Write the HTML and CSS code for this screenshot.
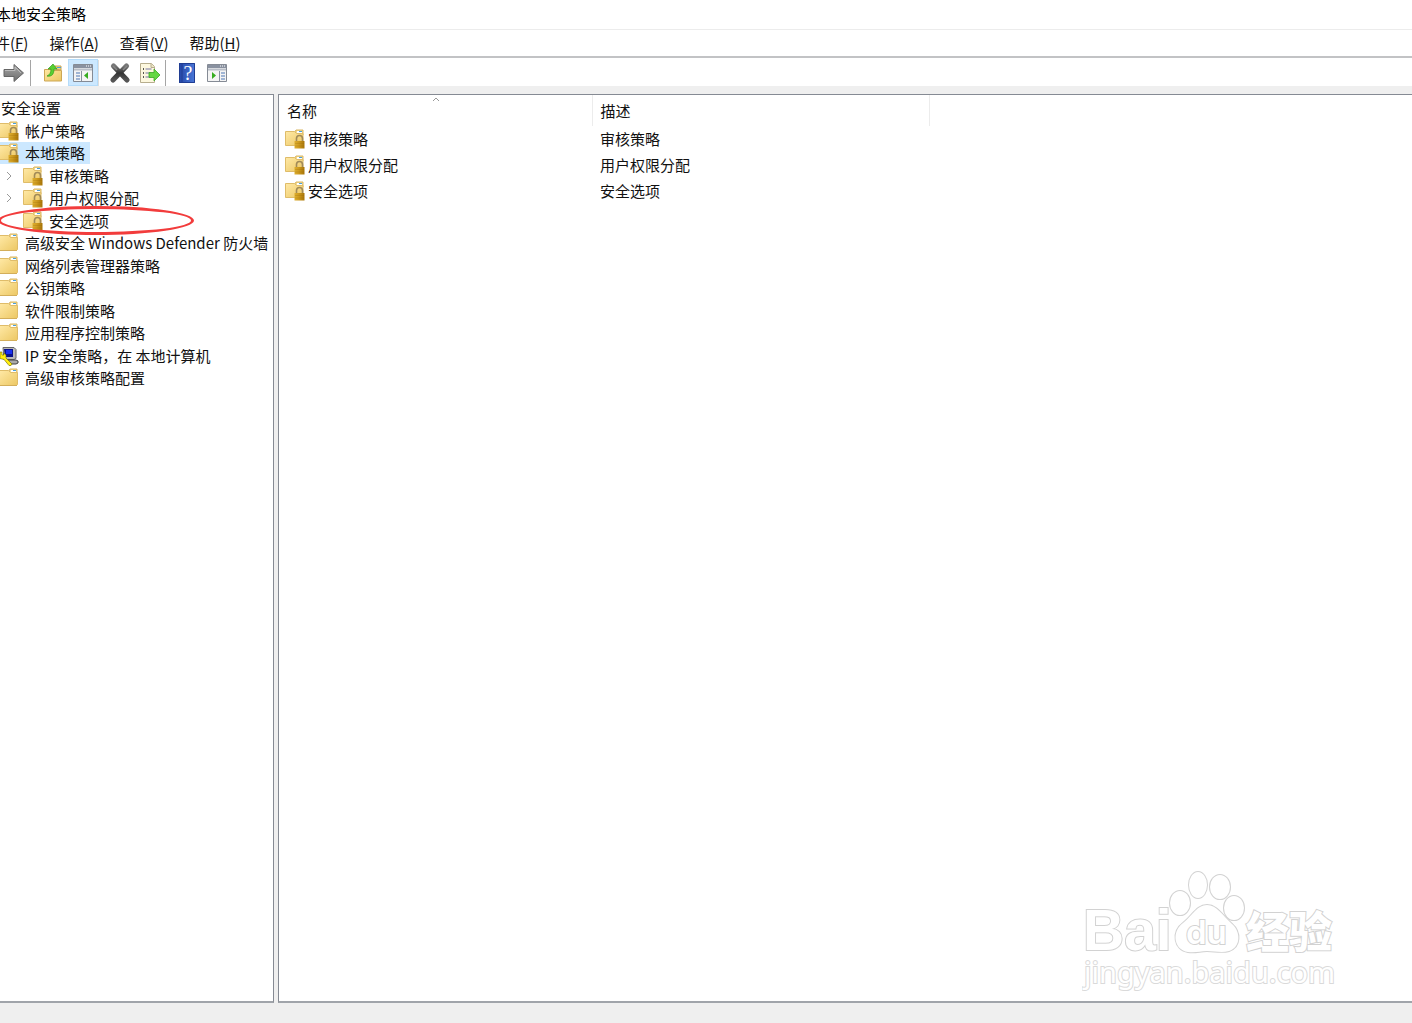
FILE: index.html
```html
<!DOCTYPE html>
<html lang="zh-CN">
<head>
    <meta charset="UTF-8">
    <title>本地安全策略</title>
    <link rel="stylesheet" href="styles.css">
</head>
<body>
    <!-- shared icons -->
    <svg class="sprite" aria-hidden="true">
        <defs>
            <linearGradient id="gold" x1="0" y1="0" x2="1" y2="1">
                <stop offset="0" stop-color="#ffe9a6"/>
                <stop offset="1" stop-color="#ecc763"/>
            </linearGradient>
            <linearGradient id="brass" x1="0" y1="0" x2="1" y2="0">
                <stop offset="0" stop-color="#dcae30"/>
                <stop offset="0.4" stop-color="#cf9c20"/>
                <stop offset="1" stop-color="#a87508"/>
            </linearGradient>
            <linearGradient id="metal" x1="0" y1="0" x2="0" y2="1">
                <stop offset="0" stop-color="#a8a8a8"/>
                <stop offset="1" stop-color="#6c6c6c"/>
            </linearGradient>
            <linearGradient id="dark" x1="0" y1="0" x2="0" y2="1">
                <stop offset="0" stop-color="#777"/>
                <stop offset="0.5" stop-color="#333"/>
                <stop offset="1" stop-color="#555"/>
            </linearGradient>
            <linearGradient id="blue" x1="0" y1="0" x2="1" y2="0">
                <stop offset="0" stop-color="#2446a8"/>
                <stop offset="1" stop-color="#4a78d8"/>
            </linearGradient>
            <symbol id="folder" viewBox="0 0 20 20">
                <path d="M9 5l2-4h7v5H9z" fill="#f3d98c" stroke="#d9b765"/>
                <path d="M12 2h5v2h-5z" fill="#fff"/>
                <path d="M14 2h3v1h-3z" fill="#4aa0dc"/>
                <path d="M.5 2.500h9l2 2h7v12l-1 1H.5z" fill="url(#gold)" stroke="#dfbc69"/>
                <path d="M1 17.500h17" stroke="#d3ae5a"/>
            </symbol>
            <symbol id="lock-folder" viewBox="0 0 20 20">
                <path d="M9 4l2-3h7v5H9z" fill="#f3d98c" stroke="#d9b765"/>
                <path d="M12 2h5v2h-5z" fill="#fff"/>
                <path d="M14 2h3v1h-3z" fill="#4aa0dc"/>
                <path d="M.5 2.500h9l2 2H18v12H.5z" fill="url(#gold)" stroke="#dfbc69"/>
                <path d="M11.500 12.500v-3a3 3 0 0 1 6 0v3" fill="none" stroke="#a08a58" stroke-width="1.600"/>
                <path d="M9.500 12h10v7.500h-10z" fill="url(#brass)"/>
                <path d="M10 14.500h9M10 17h9" stroke="#8f6306" stroke-width=".7" opacity=".3"/>
            </symbol>
            <symbol id="computer" viewBox="0 0 20 20">
                <path d="M4 1.500h11l2 2v9l-2 1H5z" fill="#b9b9b9" stroke="#666"/>
                <path d="M5 3h9v8H6z" fill="#0a128c"/>
                <path d="M7 4h6v4H7z" fill="#1830f0"/>
                <path d="M8 14h9l2 1v2l-2 1h-6z" fill="#aaa" stroke="#444"/>
                <path d="M1 6l2 0 0 3 2 0 0-2 2 2 0 3 6 6-1 1.500h-2l-5-6-4-1z" fill="#ffee10" stroke="#6f6800" stroke-width=".6"/>
            </symbol>
            <symbol id="console" viewBox="0 0 20 18">
                <path d="M.5.5h19v17H.5z" fill="#f4f4f4" stroke="#858b95"/>
                <path d="M1 1h18v3H1z" fill="#8991a0"/>
                <path d="M13 2h1M15 2h1M17 2h1" stroke="#fff"/>
                <path d="M1 5.500h18" stroke="#b9bec8" stroke-width="2"/>
            </symbol>
        </defs>
    </svg>

    <header class="title-bar"><h1>本地安全策略</h1></header>

    <nav class="menu-bar">
        <button>件(<u>F</u>)</button>
        <button>操作(<u>A</u>)</button>
        <button>查看(<u>V</u>)</button>
        <button>帮助(<u>H</u>)</button>
    </nav>

    <div class="toolbar">
        <button aria-label="前进">
            <svg width="22" height="20" viewBox="0 0 22 20"><path d="M1 6.500h10V1.500l9.500 8.500-9.500 8.500v-5H1z" fill="url(#metal)" stroke="#666"/><path d="M2 7.500h10V4l6 6" fill="none" stroke="#bbb"/></svg>
        </button>
        <span class="divider"></span>
        <button aria-label="向上">
            <svg width="20" height="20" viewBox="0 0 20 20"><path d="M11 6l1-3h6v4z" fill="#f2d482" stroke="#caa552"/><path d="M14 4h4v1h-4z" fill="#4aa0dc"/><path d="M1.500 6.500h7l2 1h8V18H1.500z" fill="url(#gold)" stroke="#cda755"/><path d="M4 13c3-1 4-4 4-7H5l5-5 4 5h-3c0 5-2 8-7 7z" fill="#58cf32" stroke="#319c1c" stroke-width=".7"/></svg>
        </button>
        <button class="active" aria-label="显示控制台树">
            <svg width="20" height="18" viewBox="0 0 20 18"><use href="#console"/><path d="M8.500 7v10" stroke="#8991a0"/><path d="M3 9h4M3 12h4M3 15h4" stroke="#4d77b5"/><path d="M15 8v7l-4-3.500z" fill="#37ad20"/></svg>
        </button>
        <span class="divider light"></span>
        <button aria-label="删除">
            <svg width="22" height="22" viewBox="0 0 22 22"><path d="M4.500 4L18 18M17.500 4L4 18" stroke="url(#dark)" stroke-width="5.200" stroke-linecap="round"/><path d="M4 4l4 4M18 4l-4 4" stroke="#888" stroke-width="1.500"/></svg>
        </button>
        <button aria-label="导出列表">
            <svg width="22" height="22" viewBox="0 0 22 22"><path d="M1.500 1.500h11l3 3v16h-14z" fill="#fdf8df" stroke="#b7ae8e"/><path d="M12 1.500v4h4" fill="#ece4c5" stroke="#b7ae8e"/><path d="M4 7h1M4 11h1M4 15h1" stroke="#222" stroke-width="1.500"/><path d="M6.500 7h6M6.500 11h5M6.500 15h5" stroke="#7776a5"/><path d="M10 10.500h5V7l6 6-6 6v-3.500h-5z" fill="#65d842" stroke="#3aa822" stroke-width=".8"/></svg>
        </button>
        <span class="divider tight"></span>
        <button aria-label="帮助">
            <svg width="18" height="20" viewBox="0 0 18 20"><path d="M1 0h16v20H1z" fill="url(#blue)"/><path d="M1.500 .5h15v19h-15zM4 1v18" fill="none" stroke="#203d92"/><text class="help-mark" x="10" y="17" text-anchor="middle">?</text></svg>
        </button>
        <button aria-label="显示操作窗格">
            <svg width="20" height="18" viewBox="0 0 20 18"><use href="#console"/><path d="M12.500 7v10" stroke="#8991a0"/><path d="M14 9h4M14 12h4M14 15h4" stroke="#4d77b5"/><path d="M5 8v7l4-3.500z" fill="#37ad20"/></svg>
        </button>
    </div>

    <main class="panes">
        <ul class="tree pane">
            <li class="root">安全设置</li>
            <li><svg class="icon"><use href="#lock-folder"/></svg>帐户策略</li>
            <li class="selected"><svg class="icon"><use href="#lock-folder"/></svg>本地策略</li>
            <li class="child"><svg class="chevron" viewBox="0 0 6 8"><path d="M1 0l4 4-4 4"/></svg><svg class="icon"><use href="#lock-folder"/></svg>审核策略</li>
            <li class="child"><svg class="chevron" viewBox="0 0 6 8"><path d="M1 0l4 4-4 4"/></svg><svg class="icon"><use href="#lock-folder"/></svg>用户权限分配</li>
            <li class="child marked"><span class="chevron"></span><svg class="icon"><use href="#lock-folder"/></svg>安全选项</li>
            <li><svg class="icon"><use href="#folder"/></svg>高级安全 Windows Defender 防火墙</li>
            <li><svg class="icon"><use href="#folder"/></svg>网络列表管理器策略</li>
            <li><svg class="icon"><use href="#folder"/></svg>公钥策略</li>
            <li><svg class="icon"><use href="#folder"/></svg>软件限制策略</li>
            <li><svg class="icon"><use href="#folder"/></svg>应用程序控制策略</li>
            <li><svg class="icon"><use href="#computer"/></svg>IP 安全策略，在 本地计算机</li>
            <li><svg class="icon"><use href="#folder"/></svg>高级审核策略配置</li>
        </ul>

        <section class="list pane">
            <table>
                <thead>
                    <tr>
                        <th class="name">名称<svg class="sort" viewBox="0 0 8 5"><path d="M1 4l3-3 3 3"/></svg></th>
                        <th class="desc">描述</th>
                        <th></th>
                    </tr>
                </thead>
                <tbody>
                    <tr><td><div class="item"><svg class="icon"><use href="#lock-folder"/></svg>审核策略</div></td><td>审核策略</td><td></td></tr>
                    <tr><td><div class="item"><svg class="icon"><use href="#lock-folder"/></svg>用户权限分配</div></td><td>用户权限分配</td><td></td></tr>
                    <tr><td><div class="item"><svg class="icon"><use href="#lock-folder"/></svg>安全选项</div></td><td>安全选项</td><td></td></tr>
                </tbody>
            </table>

            <svg class="watermark" width="264" height="130" viewBox="0 0 264 130">
                <text class="brand" x="1" y="84">Bai</text>
                <g class="paw">
                    <ellipse cx="98" cy="37" rx="10" ry="12"/>
                    <ellipse cx="116" cy="19" rx="9" ry="13"/>
                    <ellipse cx="138" cy="21" rx="10" ry="12"/>
                    <ellipse cx="152" cy="42" rx="10" ry="12"/>
                    <path d="M125 39C115 39 111 49 101 57C89 66 92 84 106 86C114 87 118 85 125 85C132 85 140 87 147 85C159 81 159 66 150 58C140 49 135 39 125 39z"/>
                </g>
                <text class="du" x="104" y="78">du</text>
                <text class="cjk" x="164" y="82">经验</text>
                <text class="url" x="2" y="117">jingyan.baidu.com</text>
            </svg>
        </section>
    </main>
    <footer class="status-bar"></footer>
</body>
</html>
```

FILE: styles.css
```css
*,
*::after {
    box-sizing: border-box;
}

body {
    margin: 0;
    height: 100vh;
    display: flex;
    flex-direction: column;
    overflow: hidden;
    background: #efefef;
    color: #111;
    font-family: "Noto Sans CJK SC", sans-serif;
    font-size: 15px;
    line-height: 22px;
}

button {
    padding: 0;
    border: none;
    background: none;
    color: inherit;
    font: inherit;
}

.sprite {
    position: absolute;
    width: 0;
    height: 0;
}

.title-bar {
    height: 30px;
    padding-top: 3px;
    background: #fff;
    border-bottom: 1px solid #ececec;
}

h1 {
    margin: 0 0 0 -4px;
    color: #000;
    font-size: 15px;
    font-weight: 400;
}

.menu-bar {
    display: flex;
    gap: 21px;
    height: 28px;
    padding-bottom: 1px;
    background: #fff;
    border-bottom: 2px solid #c2c3c5;
}

.menu-bar button:first-child {
    margin-left: -5px;
}

.toolbar {
    display: flex;
    align-items: center;
    height: 28px;
    padding-top: 1px;
    background: #fff;
}

.toolbar button {
    display: flex;
    align-items: center;
    justify-content: center;
    width: 30px;
    height: 27px;
}

.toolbar button:first-child {
    margin-left: -1px;
}

.toolbar button.active {
    background: #cce8ff;
    border: 1px solid #b5dcfa;
}

.divider {
    width: 1px;
    height: 26px;
    margin: 0 7px 0 1px;
    background: #a5a5a5;
}

.divider.light {
    margin: 0 6px 0 0;
    background: #ddd;
}

.divider.tight {
    margin: 0 6px 0 0;
}

.help-mark {
    fill: #fff;
    font-family: "Liberation Serif", serif;
    font-size: 20px;
}

.panes {
    display: flex;
    flex: 1;
    gap: 4px;
    margin-top: 8px;
    min-height: 0;
}

.pane {
    background: #fff;
    border: 1px solid #858a93;
    border-bottom: 2px solid #a0a4aa;
}

.tree {
    display: flex;
    flex-direction: column;
    width: 274px;
    margin: 0;
    padding: 2px 0 0;
    border-left: none;
    list-style: none;
    white-space: nowrap;
}

.tree li {
    display: flex;
    align-items: center;
    align-self: flex-start;
    gap: 6px;
    height: 22px;
    padding-right: 5px;
    margin-left: -1px;
}

.tree li:nth-child(even) {
    height: 23px;
}

.tree .root {
    margin-left: 1px;
}

.tree .selected {
    background: #cce8ff;
}

.tree .child {
    margin-left: 6px;
}

.icon {
    flex: none;
    width: 20px;
    height: 20px;
}

.chevron {
    flex: none;
    width: 6px;
    height: 8px;
    margin-right: 5px;
    fill: none;
    stroke: #999;
}

.marked {
    position: relative;
}

/* red ring round the highlighted entry */
.marked::after {
    content: "";
    position: absolute;
    left: -8px;
    top: -3px;
    width: 196px;
    height: 29px;
    border: 3px solid #f23c3c;
    border-radius: 50%;
}

.list {
    position: relative;
    flex: 1;
    border-right: none;
}

table {
    width: 100%;
    border-collapse: collapse;
    table-layout: fixed;
}

th {
    position: relative;
    height: 31px;
    padding: 1px 8px 0;
    border-right: 1px solid #ececec;
    font-weight: 400;
    text-align: left;
}

th:last-child {
    border-right: none;
}

.name {
    width: 313px;
}

.desc {
    width: 337px;
}

td {
    height: 26px;
    padding: 0 8px;
}

td:first-child {
    padding-left: 6px;
}

.item {
    display: flex;
    align-items: center;
    gap: 3px;
}

.sort {
    position: absolute;
    top: 2px;
    left: 49%;
    width: 8px;
    height: 5px;
    fill: none;
    stroke: #999;
}

.watermark {
    position: absolute;
    right: 66px;
    bottom: 5px;
    fill: #fff;
    stroke: #d2d2d2;
    stroke-width: 2px;
    paint-order: stroke;
}

.brand {
    font: 700 57px "Liberation Sans", sans-serif;
}

.du {
    font: 600 33px Inter, sans-serif;
}

.cjk {
    font: 900 43px "Noto Sans CJK SC", sans-serif;
}

.url {
    font: 400 29px "Noto Sans", sans-serif;
    stroke: #dadada;
}

.status-bar {
    height: 20px;
}
```
